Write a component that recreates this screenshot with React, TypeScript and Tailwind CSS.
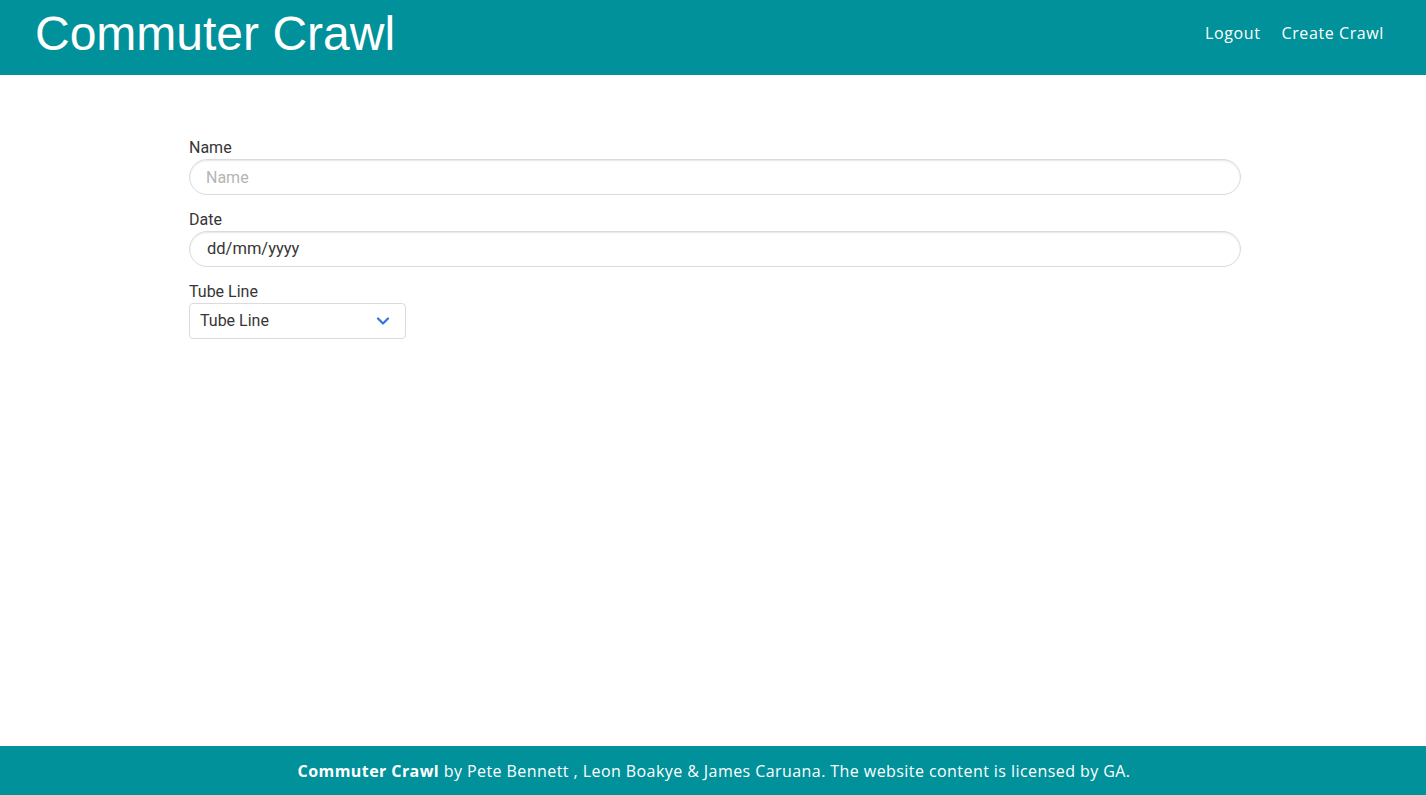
import React from "react";

export default function App() {
  return (
    <div className="min-h-screen flex flex-col bg-white">
      <header className="h-[75px] bg-[#00919a] flex items-center justify-between pl-[35px] pr-[32px]">
        <h1 className="text-white text-[48px] leading-none font-['Liberation_Sans',Arial,sans-serif] -mt-[7px]">
          Commuter Crawl
        </h1>
        <nav className="flex items-center gap-[1px] font-['Open_Sans',sans-serif] text-white text-[16px] tracking-[0.6px] -mt-[10px]">
          <a className="px-[10px] py-2">Logout</a>
          <a className="px-[10px] py-2">Create Crawl</a>
        </nav>
      </header>

      <main className="flex-1 pt-[60px] font-['Roboto',sans-serif]">
        <div className="w-[1052px] ml-[189px]">
          <div className="mb-3">
            <label className="block h-6 pt-px text-[16px] leading-6 text-[#363636]">Name</label>
            <input
              className="w-full h-9 rounded-full border border-[#dbdbdb] shadow-[inset_0_1px_2px_rgba(10,10,10,0.1)] px-[16px] text-[16px] text-[#363636] placeholder:text-[#b5b5b5] outline-none"
              placeholder="Name"
            />
          </div>
          <div className="mb-3">
            <label className="block h-6 pt-px text-[16px] leading-6 text-[#363636]">Date</label>
            <div className="w-full h-9 rounded-full border border-[#dbdbdb] shadow-[inset_0_1px_2px_rgba(10,10,10,0.1)] px-[17px] flex items-center text-[16.5px] text-[#363636]">
              dd/mm/yyyy
            </div>
          </div>
          <div>
            <label className="block h-6 pt-px text-[16px] leading-6 text-[#363636]">Tube Line</label>
            <div className="w-[217px] h-9 rounded border border-[#dbdbdb] flex items-center justify-between pl-[10px] pr-[15px] text-[16px] text-[#363636]">
              <span>Tube Line</span>
              <svg width="14" height="10" viewBox="0 0 14 10" fill="none">
                <path d="M2 2.5 L7 7.5 L12 2.5" stroke="#3273dc" strokeWidth="2.2" strokeLinecap="round" strokeLinejoin="round" />
              </svg>
            </div>
          </div>
        </div>
      </main>

      <footer className="h-[49px] bg-[#00919a] flex items-center justify-center text-white text-[16px] tracking-[0.43px] font-['Open_Sans',sans-serif]">
        <span className="translate-x-[1px]">
          <strong className="font-bold">Commuter Crawl</strong> by Pete Bennett , Leon Boakye &amp; James Caruana. The website content is licensed by GA.
        </span>
      </footer>
    </div>
  );
}
